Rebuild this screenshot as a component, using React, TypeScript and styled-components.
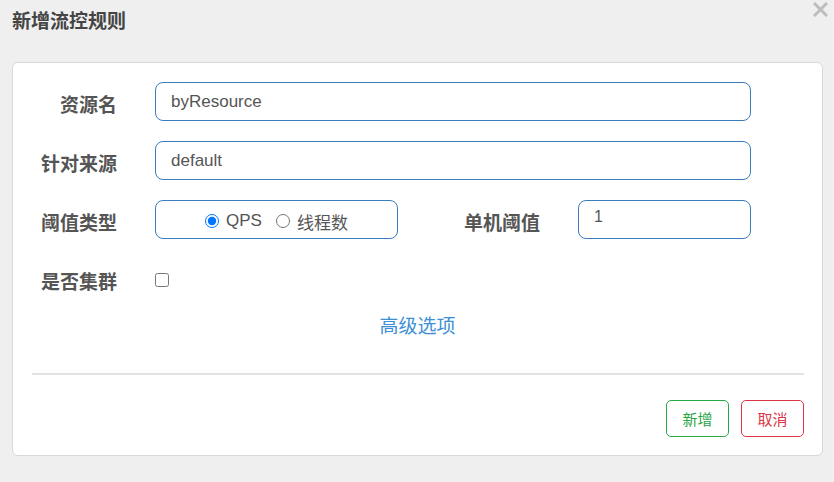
import React from 'react';
import styled, { createGlobalStyle } from "styled-components";

const GlobalStyle = createGlobalStyle`
  body {
    margin: 0;
    background: #efefef;
    font-family: "Liberation Sans", "Noto Sans CJK SC", sans-serif;
  }
`;

const App = () => {
  return (
    <Page>
      <GlobalStyle />
      <Header>
        <Title>新增流控规则</Title>
        <Close aria-label="close">
          <svg width="15" height="15" viewBox="0 0 15 15">
            <path d="M2 2 L13 13 M13 2 L2 13" stroke="#bdbdbd" strokeWidth="3" strokeLinecap="square" />
          </svg>
        </Close>
      </Header>

      <Card>
        <Form>
          <Row>
            <Label>资源名</Label>
            <Input width={596} defaultValue="byResource" />
          </Row>
          <Row>
            <Label>针对来源</Label>
            <Input width={596} defaultValue="default" />
          </Row>
          <Row>
            <Label>阈值类型</Label>
            <RadioBox>
              <RadioItem>
                <Radio type="radio" name="grade" defaultChecked />
                <span>QPS</span>
              </RadioItem>
              <RadioItem>
                <Radio type="radio" name="grade" />
                <span>线程数</span>
              </RadioItem>
            </RadioBox>
            <Label width={142}>单机阈值</Label>
            <Input width={173} small defaultValue="1" />
          </Row>
          <Row>
            <Label>是否集群</Label>
            <Check type="checkbox" />
          </Row>
          <LinkRow>
            <Advanced>高级选项</Advanced>
          </LinkRow>
        </Form>

        <Divider />

        <Footer>
          <Button tone="#28a745">新增</Button>
          <Button tone="#dc3545">取消</Button>
        </Footer>
      </Card>
    </Page>
  );
};

const Page = styled.div`
  width: 834px;
  height: 482px;
  box-sizing: border-box;
`;

const Header = styled.div`
  display: flex;
  align-items: flex-start;
  height: 62px;
  padding-left: 12px;
`;

const Title = styled.h4`
  margin: 9px 0 0;
  font-size: 19px;
  line-height: 26px;
  font-weight: 700;
  color: #444;
`;

const Close = styled.div`
  margin: 2px 6px 0 auto;
  width: 15px;
  height: 15px;
  cursor: pointer;
  svg {
    display: block;
  }
`;

const Card = styled.div`
  margin: 0 11px 0 12px;
  height: 394px;
  box-sizing: border-box;
  background: #fff;
  border: 1px solid #d8d8d8;
  border-radius: 6px;
  padding: 19px 0 18px;
  display: flex;
  flex-direction: column;
`;

const Form = styled.div`
  display: flex;
  flex-direction: column;
  gap: 20px;
`;

const Row = styled.div`
  display: flex;
  align-items: center;
  height: 39px;
`;

const Label = styled.label<{ width?: number }>`
  width: ${(p) => p.width ?? 104}px;
  padding-right: 38px;
  flex-shrink: 0;
  text-align: right;
  font-size: 19px;
  font-weight: 700;
  color: #555;
  padding-top: 3px;
`;

const Input = styled.input<{ width: number; small?: boolean }>`
  width: ${(p) => p.width}px;
  height: 39px;
  box-sizing: border-box;
  border: 1px solid #3a7dbf;
  border-radius: 8px;
  padding: ${(p) => (p.small ? "0 15px 5px" : "0 15px")};
  font-family: "Liberation Sans", "Noto Sans CJK SC", sans-serif;
  font-size: ${(p) => (p.small ? 16 : 17)}px;
  color: #555;
  outline: none;
`;

const RadioBox = styled.div`
  width: 243px;
  height: 39px;
  box-sizing: border-box;
  border: 1px solid #3a7dbf;
  border-radius: 8px;
  display: flex;
  align-items: center;
  justify-content: center;
  gap: 14px;
  padding-top: 3px;
`;

const RadioItem = styled.label`
  display: flex;
  align-items: center;
  font-size: 17px;
  color: #555;
`;

const Radio = styled.input`
  width: 14px;
  height: 14px;
  margin: 0 7px 0 0;
`;

const Check = styled.input`
  width: 14px;
  height: 14px;
  margin: 2px 0 0;
`;

const LinkRow = styled.div`
  display: flex;
  justify-content: center;
  height: 22px;
  margin-top: -2px;
`;

const Advanced = styled.a`
  font-size: 19px;
  line-height: 22px;
  color: #3d8fd6;
  cursor: pointer;
`;

const Divider = styled.div`
  height: 2px;
  background: #e2e2e2;
  margin: 35px 18px 0 19px;
`;

const Footer = styled.div`
  display: flex;
  justify-content: flex-end;
  gap: 12px;
  margin-top: 25px;
  padding-right: 18px;
`;

const Button = styled.button<{ tone: string }>`
  width: 63px;
  height: 37px;
  background: #fff;
  border: 1px solid ${(p) => p.tone};
  border-radius: 5px;
  color: ${(p) => p.tone};
  font-family: "Noto Sans CJK SC", sans-serif;
  font-size: 15px;
  padding: 0;
  cursor: pointer;
`;

export default App;
